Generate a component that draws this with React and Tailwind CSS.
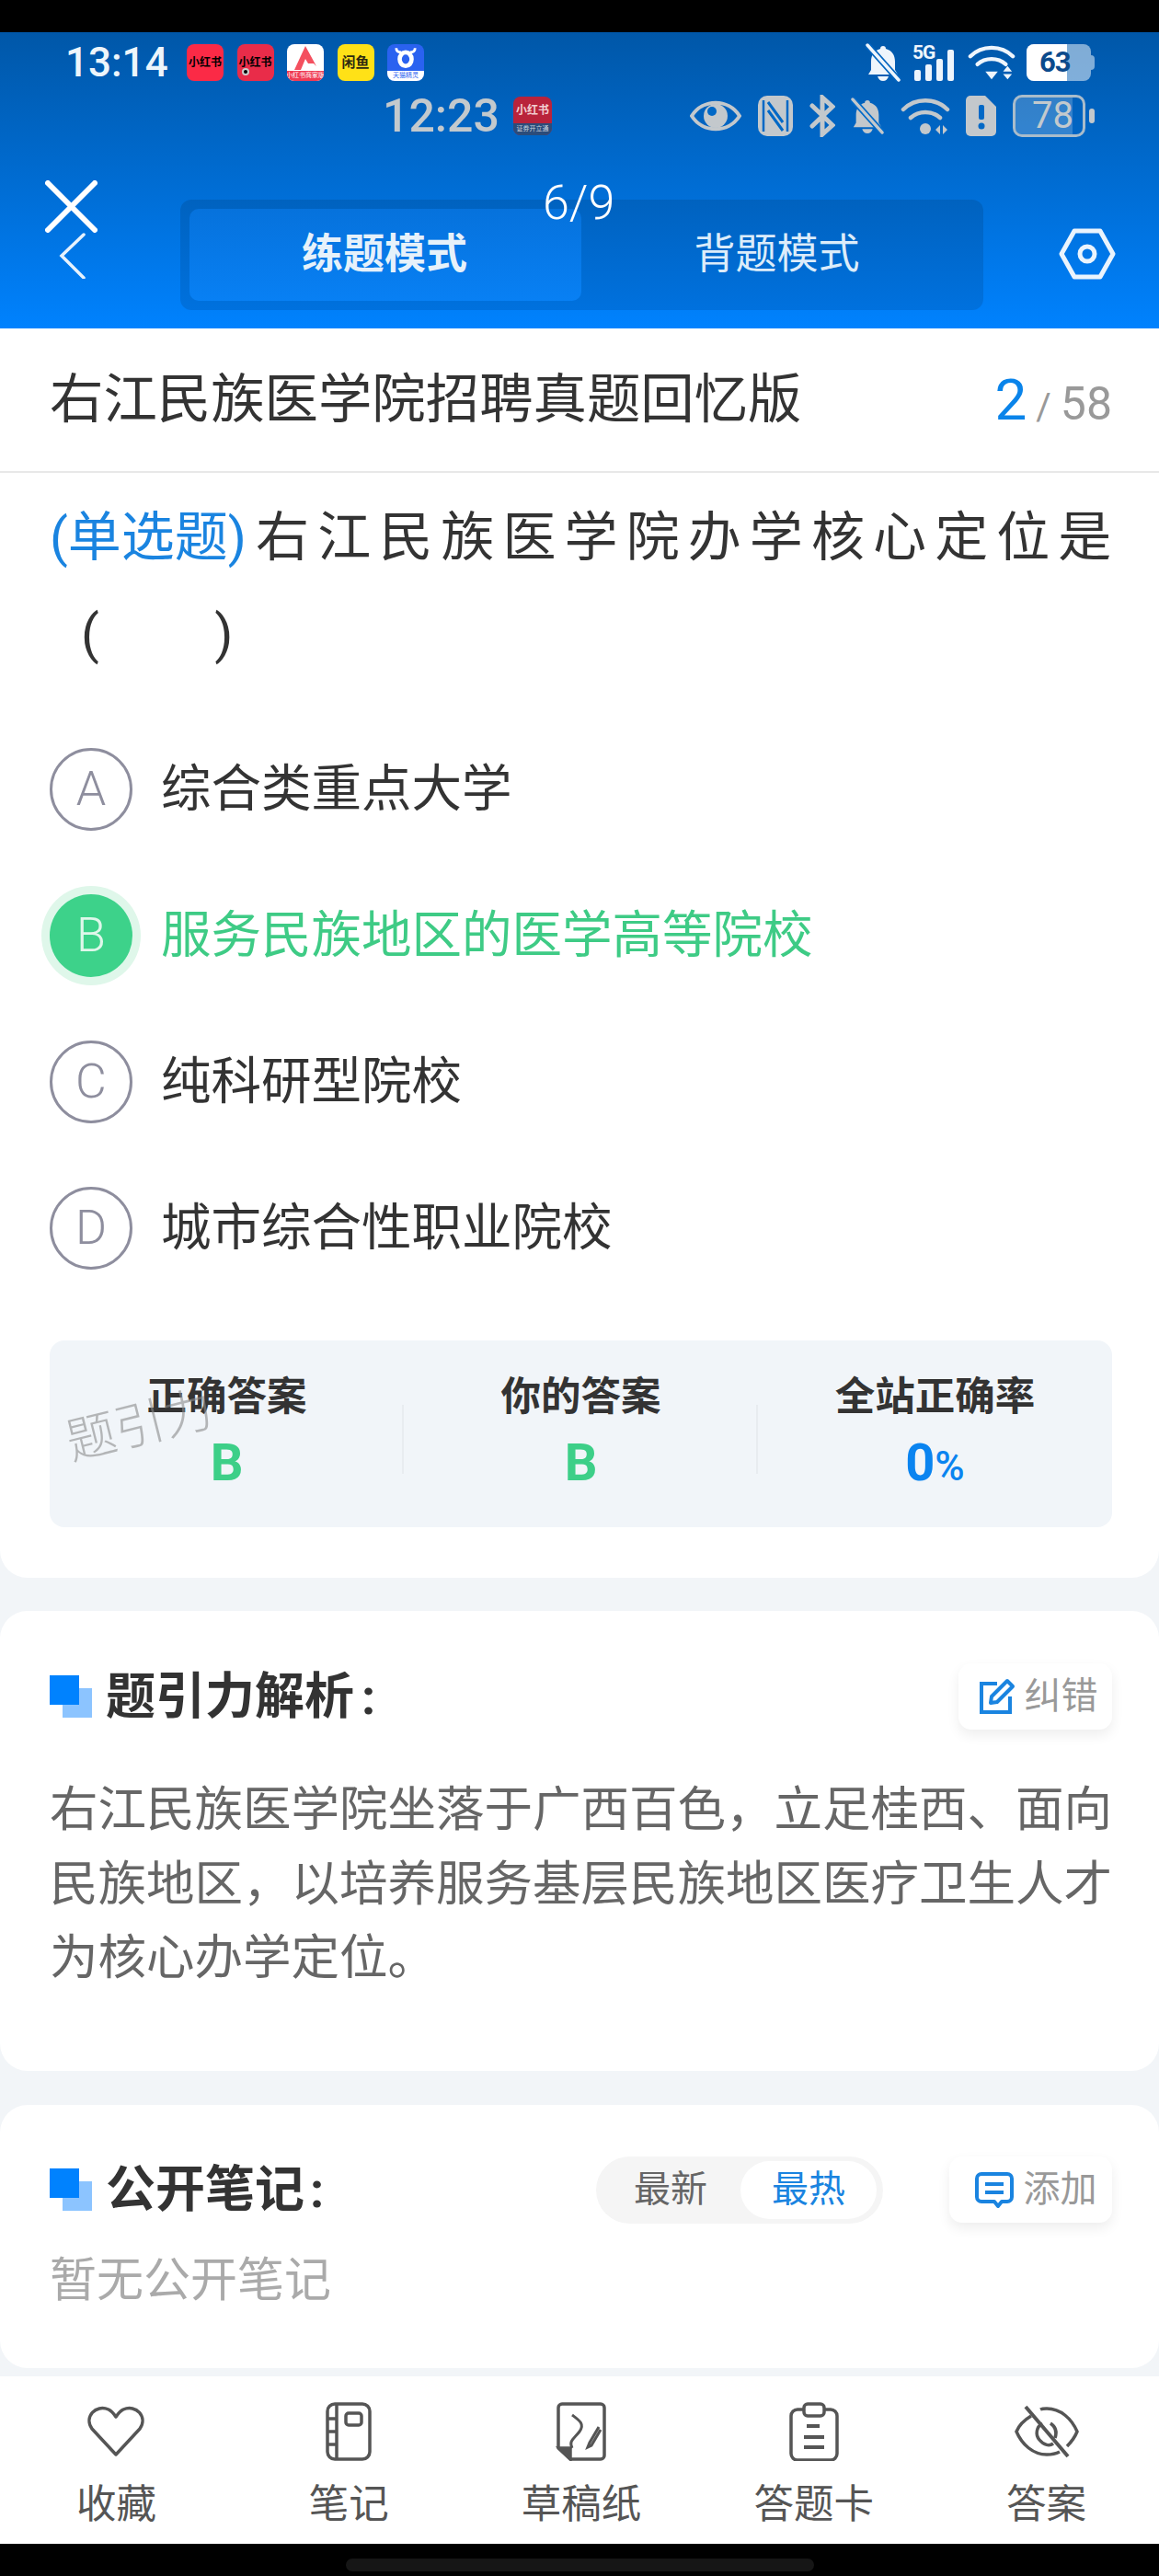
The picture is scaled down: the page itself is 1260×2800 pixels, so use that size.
const FONT = "font-['Roboto','Noto_Sans_CJK_SC',sans-serif]"

function AppTile({ bg, color = 'text-white', label, sub, subBg, subColor = 'text-white', dot, logo }) {
  return (
    <div className={`relative w-10 h-10 rounded-lg overflow-hidden flex flex-col items-center justify-center ${bg}`}>
      {logo ? (
        <span className="flex-1 flex items-center justify-center">{logo}</span>
      ) : (
        <span className={`flex-1 flex items-center justify-center font-bold leading-none whitespace-nowrap ${color}`}>{label}</span>
      )}
      {sub && <span className={`w-full h-[11px] flex items-center justify-center text-[7px] leading-none whitespace-nowrap ${subBg} ${subColor}`}>{sub}</span>}
      {dot && <span className="absolute left-[5px] bottom-[6px] w-2 h-2 rounded-full bg-black border-2 border-white/80" />}
    </div>
  )
}

function MutedBell({ className, color, gap = '#0064bf' }) {
  return (
    <svg viewBox="0 0 40 42" className={className} fill={color}>
      <path d="M20 3c-2 0-3 1-3 3C10 8 7 13 7 20v9l-3 5h32l-3-5v-9c0-7-3-12-10-14 0-2-1-3-3-3Z" />
      <path d="M14 36h12c-1 3-3 5-6 5s-5-2-6-5Z" />
      <path d="M3 2 37 40" stroke={gap} strokeWidth="7" />
      <path d="M3 2 37 40" stroke={color} strokeWidth="3.5" strokeLinecap="round" />
    </svg>
  )
}

function WifiIcon({ className, color, arrows }) {
  return (
    <svg viewBox="0 0 54 42" className={className} fill="none" stroke={color} strokeLinecap="round">
      <path d="M3 14C16 1 38 1 51 14" strokeWidth="4.5" />
      <path d="M11 23c9-8 23-8 32 0" strokeWidth="4.5" />
      {arrows ? (
        <>
          <circle cx="27" cy="35" r="6" fill={color} stroke="none" />
          <path d="M38 36l5-5v10ZM46 31l5 5-5 5Z" fill={color} stroke="none" />
        </>
      ) : (
        <>
          <path d="M20 31h14l-7 9Z" fill={color} stroke="none" />
          <path d="M40 31l5-6 5 6ZM40 34h10l-5 6Z" fill={color} stroke="none" />
        </>
      )}
    </svg>
  )
}

function StatusBars() {
  return (
    <div className="relative w-[48px] h-10 flex items-end gap-[5px] pl-[2px]">
      <span className="absolute left-0 -top-[1px] text-[21px] leading-none font-bold tracking-[-1px] text-[#eef5fc]">5G</span>
      <span className="w-[7px] h-[12px] rounded-[2px] bg-[#eef5fc]" />
      <span className="w-[7px] h-[18px] rounded-[2px] bg-[#eef5fc]" />
      <span className="w-[7px] h-[24px] rounded-[2px] bg-[#eef5fc]" />
      <span className="w-[7px] h-[34px] rounded-[2px] bg-[#eef5fc]" />
    </div>
  )
}

function StatusRows() {
  const tiles = [
    { bg: 'bg-[#fb2a46]', color: 'text-[12px]', label: '小红书' },
    { bg: 'bg-[#e92c49]', color: 'text-[12px]', label: '小红书', dot: true },
    {
      bg: 'bg-white',
      sub: '小红书商家版',
      subBg: 'bg-[#ef3b54]',
      logo: (
        <svg viewBox="0 0 30 28" className="w-[30px] h-[28px]">
          <path d="M15 1 3 27h7l5-12 3 5h6l3 3Z" fill="#f4505f" />
        </svg>
      ),
    },
    { bg: 'bg-[#ffe117]', color: 'text-[#2e2a10] text-[15px]', label: '闲鱼' },
    {
      bg: 'bg-[#2a62f0]',
      sub: '天猫精灵',
      subBg: 'bg-white',
      subColor: 'text-[#2a62f0]',
      logo: (
        <svg viewBox="0 0 28 26" className="w-[26px] h-[25px]" fill="none" stroke="white">
          <ellipse cx="14" cy="15" rx="7" ry="8" strokeWidth="5" />
          <path d="M3 2c0 4 3 5 6 5M25 2c0 4-3 5-6 5" strokeWidth="3" />
        </svg>
      ),
    },
  ]
  const gray = '#c3c8cc'
  return (
    <>
      <div className="h-[66px] flex items-center pl-[71px] pr-[70px]">
        <span className="w-[112px] text-[44px] leading-none font-medium text-[#edf5fb] whitespace-nowrap">13:14</span>
        <div className="ml-5 flex gap-[14.5px]">
          {tiles.map((t, i) => <AppTile key={i} {...t} />)}
        </div>
        <div className="ml-auto flex items-center">
          <MutedBell className="w-[40px] h-[42px]" color="#eef5fc" />
          <div className="ml-3"><StatusBars /></div>
          <WifiIcon className="ml-3 w-[52px] h-[42px]" color="#eef5fc" />
          <div className="ml-3 relative w-[70px] h-10 rounded-[8px] overflow-hidden bg-white/50 flex">
            <span className="w-[44px] h-full bg-white" />
            <span className="absolute inset-0 pl-[14px] flex items-center text-[31px] font-bold tracking-[-1px] text-[#0b4a8c]">63</span>
          </div>
          <span className="w-1 h-4 rounded-r bg-white/50" />
        </div>
      </div>

      <div className="h-[50px] flex items-center pl-[416px] pr-[70px]">
        <span className="w-[126px] text-[50px] leading-none font-medium text-[#c3c9cd] whitespace-nowrap">12:23</span>
        <div className="ml-[16px] w-[42px] h-[42px] rounded-lg overflow-hidden bg-[#b9233b] flex flex-col">
          <span className="flex-1 flex items-center justify-center text-[12px] font-bold leading-none text-[#f2cdd0] whitespace-nowrap">小红书</span>
          <span className="h-[13px] bg-[#2b4c7a] flex items-center justify-center text-[7px] leading-none text-[#c9d3df] whitespace-nowrap">证券开立通</span>
        </div>
        <div className="ml-auto flex items-center">
          <svg viewBox="0 0 56 44" className="w-[56px] h-[44px]" fill="none">
            <path d="M2 22C14 3 42 3 54 22 42 41 14 41 2 22Z" stroke={gray} strokeWidth="4" />
            <circle cx="28" cy="22" r="13" fill={gray} />
            <circle cx="24" cy="17" r="5" fill="#0068c6" />
          </svg>
          <svg viewBox="0 0 40 46" className="ml-[17px] w-[40px] h-[46px]">
            <rect x="1" y="1" width="38" height="44" rx="10" fill={gray} />
            <path d="M7 6v34M33 6v34" stroke="#0068c6" strokeWidth="2.5" />
            <path d="M12 8l16 22M12 17l16 22" fill="none" stroke="#0068c6" strokeWidth="3" />
          </svg>
          <svg viewBox="0 0 28 46" className="ml-[17px] w-[28px] h-[46px]" fill="none" stroke={gray} strokeWidth="5" strokeLinecap="round">
            <path d="M3 12 25 33 14 43V3l11 10L3 34" />
          </svg>
          <MutedBell className="ml-[16px] w-[38px] h-[44px]" color={gray} gap="#006ac9" />
          <WifiIcon className="ml-[17px] w-[54px] h-[44px]" color={gray} arrows />
          <svg viewBox="0 0 34 46" className="ml-[17px] w-[34px] h-[46px]">
            <path d="M5 1h16l12 12v27a5 5 0 0 1-5 5H5a5 5 0 0 1-5-5V6a5 5 0 0 1 5-5Z" fill={gray} />
            <rect x="14" y="11" width="6" height="16" rx="2" fill="#0068c6" />
            <circle cx="17" cy="34" r="3.5" fill="#0068c6" />
          </svg>
          <div className="ml-[17px] relative w-[79px] h-[46px] rounded-[10px] border-[3px] border-[#a9bccb] overflow-hidden flex">
            <span className="w-[62px] h-full bg-white/20" />
            <span className="absolute inset-0 pl-[18px] flex items-center text-[40px] leading-none text-[#c3c9cd]">78</span>
          </div>
          <span className="ml-1 w-[6px] h-4 rounded bg-[#c3c8cc]" />
        </div>
      </div>
    </>
  )
}

function Header() {
  return (
    <header className="relative h-[322px] bg-gradient-to-b from-[#0057a8] to-[#0082fe]">
      <StatusRows />
      <span className="absolute left-[590px] top-[160px] text-[52px] leading-none font-light text-white">6/9</span>
      <div className="mt-[45px] flex">
        <div className="ml-[49px] w-[57px] flex flex-col">
          <svg viewBox="0 0 57 57" className="w-[57px] h-[57px]" fill="none" stroke="white" strokeWidth="6" strokeLinecap="round">
            <path d="M3 3 54 54M54 3 3 54" />
          </svg>
          <svg viewBox="0 0 30 50" className="ml-[15px] w-[30px] h-[50px]" fill="none" stroke="#e6f2fd" strokeWidth="3.5" strokeLinecap="round">
            <path d="M27 2 3 25l24 24" />
          </svg>
        </div>
        <div className="ml-[90px] mt-[21px] w-[873px] h-[120px] rounded-[12px] bg-gradient-to-b from-[#0062bf] to-[#0071de] p-[10px] flex">
          <div className="w-[426px] pr-[2px] rounded-[10px] bg-gradient-to-b from-[#0672dc] to-[#0880f4] flex items-center justify-center text-[45px] font-bold text-[#e6f1fa]">练题模式</div>
          <div className="flex-1 pr-[2px] flex items-center justify-center text-[45px] text-[#dcecfa]">背题模式</div>
        </div>
        <svg viewBox="0 0 62 56" className="ml-[82px] mt-[52px] w-[62px] h-[56px]" fill="none" stroke="#eaf4fd" strokeWidth="5" strokeLinejoin="round">
          <path d="M17 3h28l14 25-14 25H17L3 28Z" />
          <circle cx="31" cy="28" r="8" />
        </svg>
      </div>
    </header>
  )
}

function Option({ letter, text, active }) {
  return (
    <div className="h-[159px] flex items-center">
      {active ? (
        <div className="w-[90px] h-[90px] rounded-full bg-[#3dd28a] ring-[9px] ring-[#dff7ea] flex items-center justify-center text-[52px] font-light text-[#dff7ea]">{letter}</div>
      ) : (
        <div className="w-[90px] h-[90px] rounded-full border-[3px] border-[#8e8e9e] flex items-center justify-center text-[52px] font-light text-[#8e8e9e]">{letter}</div>
      )}
      <span className={`ml-[31px] text-[54.5px] leading-none whitespace-nowrap ${active ? 'text-[#3ecb85]' : 'text-[#333]'}`}>{text}</span>
    </div>
  )
}

function Stat({ title, children, divider }) {
  return (
    <div className="relative flex flex-col items-center">
      {divider && <span className="absolute right-0 top-[70px] w-[2px] h-[75px] bg-[#e8ecf0]" />}
      <span className="mt-[35px] h-[54px] flex items-center text-[43.5px] font-bold text-[#333]">{title}</span>
      <div className="mt-[16px] h-[54px] flex items-baseline">{children}</div>
    </div>
  )
}

function Question() {
  return (
    <section className="bg-white rounded-b-[30px] pb-[55px]">
      <div className="h-[157px] pl-[54px] pr-[51px] flex items-center justify-between border-b-2 border-[#e8e8e8]">
        <span className="text-[58.4px] leading-none text-[#333] whitespace-nowrap">右江民族医学院招聘真题回忆版</span>
        <div className="flex items-baseline">
          <span className="text-[62px] leading-none text-[#0a84ea]">2</span>
          <span className="ml-[10px] text-[40px] leading-none text-[#999]">/</span>
          <span className="ml-[10px] text-[50px] leading-none text-[#999]">58</span>
        </div>
      </div>
      <div className="pl-[54px] pr-[51px] pt-[18px]">
        <p className="text-[58px] leading-[105px] text-[#333] whitespace-nowrap">
          <span className="text-[#1a84e0]">(单选题)</span>
          <span className="tracking-[9.1px] ml-[10px]">右江民族医学院办学核心定位是</span>
        </p>
        <p className="text-[58px] leading-[105px] text-[#333] whitespace-pre pl-[34px] tracking-[-0.4px]">{'(         )'}</p>
        <div className="mt-[36px]">
          <Option letter="A" text="综合类重点大学" />
          <Option letter="B" text="服务民族地区的医学高等院校" active />
          <Option letter="C" text="纯科研型院校" />
          <Option letter="D" text="城市综合性职业院校" />
        </div>
        <div className="relative mt-[43px] h-[203px] rounded-[16px] bg-[#f1f5f9] grid grid-cols-3">
          <Stat title="正确答案" divider><span className="text-[56px] leading-none font-bold text-[#3dcf88]">B</span></Stat>
          <Stat title="你的答案" divider><span className="text-[56px] leading-none font-bold text-[#3dcf88]">B</span></Stat>
          <Stat title="全站正确率">
            <span className="text-[56px] leading-none font-bold text-[#0a84f0]">0</span>
            <span className="text-[44px] leading-none font-medium text-[#0a84f0]">%</span>
          </Stat>
          <span className="absolute left-[17px] top-[66px] -rotate-[14deg] text-[54px] leading-none font-light text-[#8a8a8a]/60 whitespace-nowrap">题引力</span>
        </div>
      </div>
    </section>
  )
}

function SquaresIcon() {
  return (
    <div className="relative w-[46px] h-[46px] shrink-0">
      <span className="absolute right-0 bottom-0 w-[32px] h-[32px] bg-[#8cc4ff]" />
      <span className="absolute left-0 top-0 w-[32px] h-[32px] bg-[#0082fe]" />
    </div>
  )
}

function ActionButton({ icon, label, className }) {
  return (
    <div className={`h-[72px] rounded-[14px] bg-white shadow-[0_6px_14px_rgba(0,0,0,0.07)] flex items-center justify-center gap-[10px] text-[40px] text-[#999] ${className}`}>
      {icon}
      {label}
    </div>
  )
}

function Analysis() {
  return (
    <section className="mt-[36px] h-[500px] bg-white rounded-[30px] pl-[54px] pr-[51px] pt-[57px]">
      <div className="h-[72px] flex items-center">
        <SquaresIcon />
        <span className="ml-[15px] text-[54px] font-bold text-[#333] whitespace-nowrap">题引力解析<span className="ml-[8px]">:</span></span>
        <ActionButton
          className="ml-auto w-[167px] pl-[6px]"
          label="纠错"
          icon={
            <svg viewBox="0 0 40 40" className="w-[40px] h-[40px]" fill="none" stroke="#1a84e0" strokeWidth="4">
              <path d="M20 6H3v31h31V20" />
              <path d="M14 20 31 3l6 6-17 17-7 1Z" strokeLinejoin="round" />
            </svg>
          }
        />
      </div>
      <p className="mt-[47px] text-[52.5px] leading-[80.5px] text-[#666]">
        右江民族医学院坐落于广西百色，立足桂西、面向民族地区，以培养服务基层民族地区医疗卫生人才为核心办学定位。
      </p>
    </section>
  )
}

function Notes() {
  return (
    <section className="mt-[37px] h-[286px] bg-white rounded-[30px] pl-[54px] pr-[51px] pt-[56px]">
      <div className="h-[72px] flex items-center">
        <SquaresIcon />
        <span className="ml-[15px] text-[54px] font-bold text-[#333] whitespace-nowrap">公开笔记<span className="ml-[6px]">:</span></span>
        <div className="ml-auto w-[312px] h-[73px] rounded-full bg-[#f5f5f5] p-[5px] flex items-center text-[40px]">
          <span className="w-[152px] text-center text-[#666]">最新</span>
          <span className="w-[148px] h-full rounded-full bg-white flex items-center justify-center text-[#1a84e0]">最热</span>
        </div>
        <ActionButton
          className="ml-[72px] w-[177px] pl-[10px]"
          label="添加"
          icon={
            <svg viewBox="0 0 44 40" className="w-[44px] h-[40px]" fill="none" stroke="#1a84e0" strokeWidth="4">
              <path d="M8 3h28a5 5 0 0 1 5 5v20a5 5 0 0 1-5 5h-6l-4 5-4-5H8a5 5 0 0 1-5-5V8a5 5 0 0 1 5-5Z" strokeLinejoin="round" />
              <path d="M12 14h20M12 23h20" />
            </svg>
          }
        />
      </div>
      <p className="mt-[37px] text-[51px] leading-none text-[#aaa]">暂无公开笔记</p>
    </section>
  )
}

const navItems = [
  {
    label: '收藏',
    icon: (
      <svg viewBox="0 0 64 56" className="w-[64px] h-[56px]">
        <path d="M32 53 6 25C-3 12 10-2 24 4c4 2 6 5 8 8 2-3 4-6 8-8 14-6 27 8 18 21Z" fill="none" stroke="#555" strokeWidth="3.5" strokeLinejoin="round" />
      </svg>
    ),
  },
  {
    label: '笔记',
    icon: (
      <svg viewBox="0 0 50 64" className="w-[50px] h-[64px]" fill="none" stroke="#555" strokeWidth="3.5">
        <rect x="2" y="2" width="46" height="60" rx="8" />
        <path d="M12 2v60M2 18h10M2 32h10M2 46h10" />
        <rect x="22" y="12" width="17" height="13" rx="3" />
      </svg>
    ),
  },
  {
    label: '草稿纸',
    icon: (
      <svg viewBox="0 0 56 64" className="w-[56px] h-[64px]" fill="none" stroke="#555" strokeWidth="3.5">
        <path d="M7 2h42a4 4 0 0 1 4 4v52a4 4 0 0 1-4 4H16L3 50V6a4 4 0 0 1 4-4Z" strokeLinejoin="round" />
        <path d="M4 50h12v12Z" fill="#555" />
        <path d="M18 14c8 6 14 10 8 18s-12 10-8 18" strokeWidth="3" />
        <path d="M47 27 37 44l-2 5 4-2 10-17" strokeWidth="3" />
      </svg>
    ),
  },
  {
    label: '答题卡',
    icon: (
      <svg viewBox="0 0 56 64" className="w-[56px] h-[64px]" fill="none" stroke="#555" strokeWidth="3.5">
        <path d="M17 8H10a7 7 0 0 0-7 7v41a7 7 0 0 0 7 7h36a7 7 0 0 0 7-7V15a7 7 0 0 0-7-7h-7" />
        <rect x="17" y="2" width="22" height="13" rx="4" />
        <path d="M20 26h14M17 38h22M17 49h22" strokeWidth="4" />
      </svg>
    ),
  },
  {
    label: '答案',
    icon: (
      <svg viewBox="0 0 70 58" className="w-[70px] h-[58px]" fill="none" stroke="#555" strokeWidth="3.5">
        <path d="M18 12C8 18 4 24 2 29c6 14 18 25 33 25 6 0 10-1 14-3M28 5c2-1 5-1 7-1 15 0 27 11 33 25-2 5-6 11-11 16" />
        <path d="M30 20c-6 4-8 12-3 18s11 7 15 4M44 36c2-6 1-12-5-16" />
        <path d="M12 2 58 56" strokeWidth="4" />
      </svg>
    ),
  },
]

function BottomNav() {
  return (
    <nav className="h-[182px] bg-white grid grid-cols-[repeat(5,252.8px)]">
      {navItems.map((item) => (
        <div key={item.label} className="flex flex-col items-center">
          <div className="mt-[28px] h-[64px] flex items-center justify-center">{item.icon}</div>
          <span className="mt-[24px] h-[48px] flex items-center text-[43.5px] text-[#555]">{item.label}</span>
        </div>
      ))}
    </nav>
  )
}

export default function App() {
  return (
    <div className={`w-[1260px] h-[2800px] bg-black flex flex-col ${FONT}`}>
      <div className="h-[35px] shrink-0" />
      <Header />
      <main className="h-[2226px] shrink-0 bg-[#f2f5f8] overflow-hidden">
        <Question />
        <Analysis />
        <Notes />
      </main>
      <BottomNav />
      <div className="flex-1 flex items-end justify-center pb-[5px]">
        <div className="w-[509px] h-[14px] rounded-full bg-[#161616]" />
      </div>
    </div>
  )
}
